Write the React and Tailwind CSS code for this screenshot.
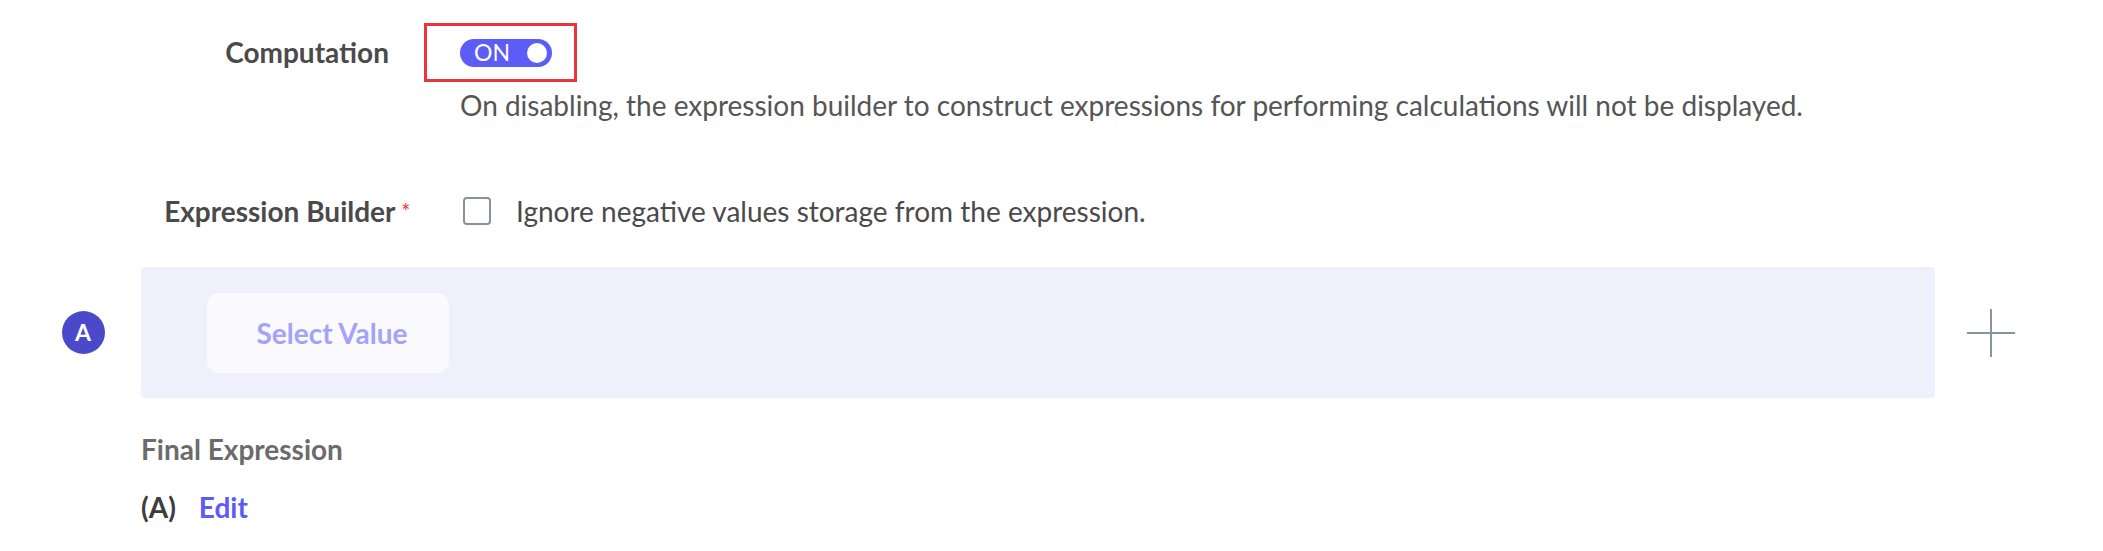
import { Plus } from 'lucide-react';

const App = () => {
  return (
    <div
      className="w-full h-[551px] bg-white pt-[23px]"
      style={{ fontFamily: "Lato, 'Open Sans', sans-serif" }}
    >
      {/* Computation */}
      <div className="flex">
        <div className="w-[460px] pr-[71px] text-right text-[28px] font-bold text-[#4a4a4a] leading-[59px]">
          Computation
        </div>
        <div>
          <div className="relative w-[92px] h-[59px] flex items-center">
            <div className="absolute -left-[36px] -right-[25px] top-0 bottom-0 border-[3px] border-[#ea353b]" />
            <div className="w-[92px] h-[28px] rounded-full bg-[#5c5cf6] flex items-center justify-between pl-[14px] pr-[5px]">
              <span className="text-white text-[23px] leading-none">ON</span>
              <span className="w-[20px] h-[20px] rounded-full bg-white" />
            </div>
          </div>
          <p className="mt-[6px] text-[28px] text-[#555] leading-[34px]">
            On disabling, the expression builder to construct expressions for performing calculations will not be displayed.
          </p>
        </div>
      </div>

      {/* Expression Builder */}
      <div className="flex items-center mt-[72px] h-[34px]">
        <div className="w-[460px] pr-[50px] text-right text-[28px] font-bold text-[#4a4a4a] leading-[34px]">
          Expression Builder
          <span className="ml-[6px] text-[#f05252] text-[20px] align-top">*</span>
        </div>
        <div className="flex items-center gap-[25px] pl-[3px]">
          <span className="w-[28px] h-[28px] rounded-[4px] border-2 border-[#8791a0] bg-white" />
          <span className="text-[28px] text-[#4a4a4a] leading-[34px]">
            Ignore negative values storage from the expression.
          </span>
        </div>
      </div>

      {/* Row A */}
      <div className="flex items-center mt-[39px]">
        <div className="w-[141px] flex justify-center pl-[40px] pr-[15px]">
          <div className="w-[43px] h-[43px] rounded-full bg-[#4b49cb] text-white font-bold text-[23px] flex items-center justify-center">
            A
          </div>
        </div>
        <div className="w-[1794px] h-[131px] rounded-[4px] bg-[#f0f0fd] flex items-center pl-[66px]">
          <button className="w-[242px] h-[80px] rounded-[12px] bg-[#f9f9fe] pl-[8px] text-[28px] font-bold text-[#a5a3f8]">
            Select Value
          </button>
        </div>
        <div className="flex-1 flex justify-center pr-[56px]">
          <Plus className="w-[80px] h-[80px] text-[#8595a2]" strokeWidth={0.6} />
        </div>
      </div>

      {/* Final Expression */}
      <div className="pl-[141px] mt-[34px]">
        <div className="text-[28px] font-bold text-[#6b6b6b] leading-[34px]">Final Expression</div>
        <div className="mt-[24px] flex items-center gap-[23px] text-[28px] font-bold leading-[34px]">
          <span className="text-[#3d3d3d]">(A)</span>
          <span className="text-[#5b5bf5]">Edit</span>
        </div>
      </div>
    </div>
  );
};

export default App;
